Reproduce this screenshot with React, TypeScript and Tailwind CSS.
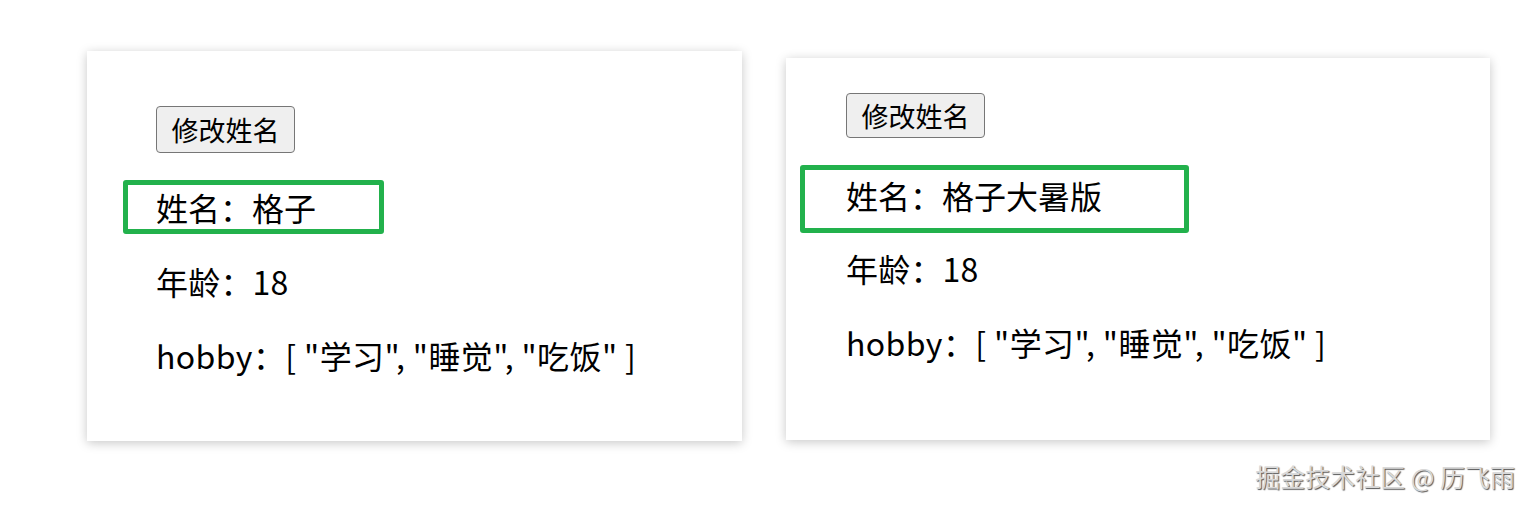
const font = "font-['Microsoft_YaHei','Noto_Sans_CJK_SC',sans-serif]";

function NameButton({ className }: { className: string }) {
  return (
    <button
      className={`block w-[139px] rounded-[4px] border border-[#767676] bg-[#efefef] text-[27px] leading-none text-black ${className}`}
    >
      修改姓名
    </button>
  );
}

const hobby = ["学习", "睡觉", "吃饭"];

export default function App() {
  return (
    <div className={`relative h-[508px] w-[1531px] bg-white text-black ${font}`}>
      <div className="flex items-start pl-[87px]">
        <div className="mt-[51px] h-[390px] w-[655px] bg-white pt-[55px] shadow-[0_2px_10px_rgba(0,0,0,0.22)]">
          <NameButton className="ml-[69px] h-[47px]" />
          <div className="ml-[36px] mt-[27px] flex h-[54px] w-[261px] items-center rounded-[3px] border-[5px] border-[#22b14c] pl-[28px] text-[32px] leading-[40px]">
            姓名：格子
          </div>
          <div className="ml-[69px] mt-[27px] text-[32px] leading-[40px] tracking-[0.2px]">年龄：18</div>
          <div className="ml-[69px] mt-[34px] text-[32px] leading-[40px] tracking-[0.4px]">
            hobby：[ {hobby.map((h) => `"${h}"`).join(", ")} ]
          </div>
        </div>

        <div className="ml-[44px] mt-[58px] h-[382px] w-[704px] bg-white pt-[35px] shadow-[0_2px_10px_rgba(0,0,0,0.22)]">
          <NameButton className="ml-[60px] h-[45px]" />
          <div className="ml-[14px] mt-[27px] flex h-[68px] w-[389px] items-center rounded-[3px] border-[5px] border-[#22b14c] pb-[8px] pl-[41px] text-[32px] leading-[40px]">
            姓名：格子大暑版
          </div>
          <div className="ml-[60px] mt-[15px] text-[32px] leading-[40px] tracking-[0.2px]">年龄：18</div>
          <div className="ml-[60px] mt-[34px] text-[32px] leading-[40px] tracking-[0.4px]">
            hobby：[ {hobby.map((h) => `"${h}"`).join(", ")} ]
          </div>
        </div>
      </div>

      <div className="absolute right-[16px] top-[459px] text-[25px] leading-[34px] text-[#d8d8d8] [text-shadow:1px_1px_1px_#555,-1px_-1px_0_#fff]">
        掘金技术社区 @ 历飞雨
      </div>
    </div>
  );
}
